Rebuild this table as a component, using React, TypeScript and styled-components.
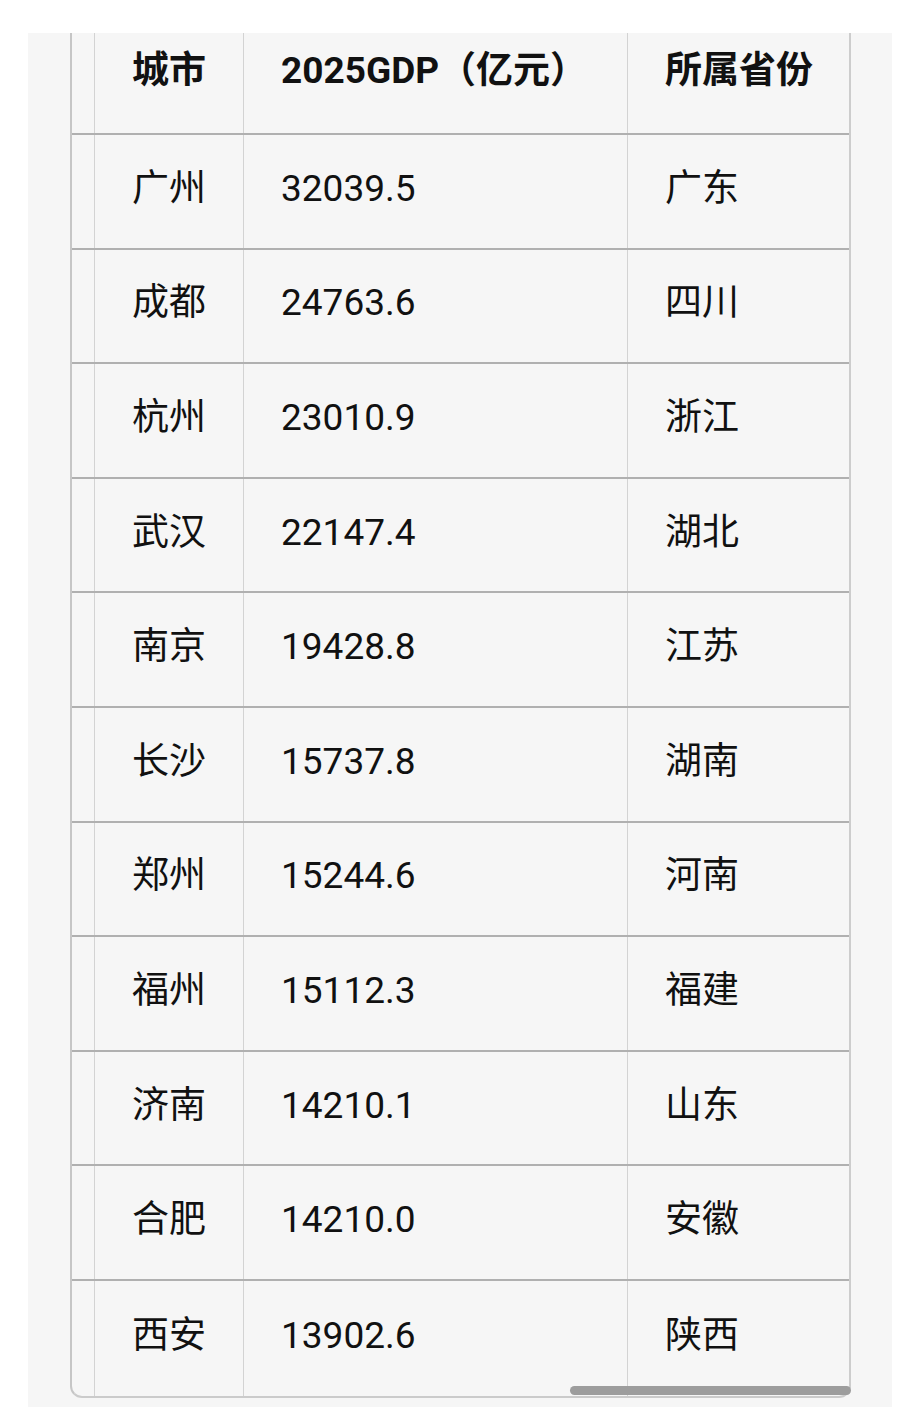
import React from "react";
import styled, { createGlobalStyle } from "styled-components";

const GlobalStyle = createGlobalStyle`
  html, body {
    margin: 0;
    padding: 0;
    background: #ffffff;
  }
  body {
    font-family: Roboto, "Noto Sans CJK SC", "Noto Sans", sans-serif;
    color: #111111;
  }
`;

const Panel = styled.div`
  margin: 33px 0 0 28px;
  width: 864px;
  height: 1374px;
  box-sizing: border-box;
  padding: 0 41px 0 42px;
  background: #f6f6f6;
`;

const TableFrame = styled.div`
  position: relative;
  border-left: 2px solid #c6c6c6;
  border-right: 2px solid #cdcdcd;
  border-bottom: 2px solid #cbcbcb;
  border-radius: 0 0 12px 12px;
`;

const Row = styled.div<{ $head?: boolean; $last?: boolean }>`
  display: grid;
  grid-template-columns: 22px 149px 384px 1fr;
  height: ${({ $head }) => ($head ? "102px" : "114.6px")};
  box-sizing: border-box;
  border-bottom: ${({ $last }) => ($last ? "none" : "2px solid #b0b0b0")};
`;

const Cell = styled.div<{ $head?: boolean }>`
  display: flex;
  align-items: center;
  box-sizing: border-box;
  padding: 0 0 ${({ $head }) => ($head ? "24px" : "5px")} 37px;
  border-left: 1.5px solid #d3d3d3;
  font-size: 37px;
  line-height: 1.3;
  font-weight: ${({ $head }) => ($head ? 700 : 400)};
  white-space: nowrap;
`;

const Gutter = styled.div``;

const ScrollThumb = styled.div`
  position: absolute;
  left: 498px;
  right: -2px;
  bottom: 1px;
  height: 9px;
  border-radius: 5px;
  background: #9d9d9d;
`;

const rows: [string, string, string][] = [
  ["广州", "32039.5", "广东"],
  ["成都", "24763.6", "四川"],
  ["杭州", "23010.9", "浙江"],
  ["武汉", "22147.4", "湖北"],
  ["南京", "19428.8", "江苏"],
  ["长沙", "15737.8", "湖南"],
  ["郑州", "15244.6", "河南"],
  ["福州", "15112.3", "福建"],
  ["济南", "14210.1", "山东"],
  ["合肥", "14210.0", "安徽"],
  ["西安", "13902.6", "陕西"],
];

export default function App() {
  return (
    <>
      <GlobalStyle />
      <Panel>
        <TableFrame>
          <Row $head>
            <Gutter />
            <Cell $head>城市</Cell>
            <Cell $head>2025GDP（亿元）</Cell>
            <Cell $head>所属省份</Cell>
          </Row>
          {rows.map(([city, gdp, prov], i) => (
            <Row key={city} $last={i === rows.length - 1}>
              <Gutter />
              <Cell>{city}</Cell>
              <Cell>{gdp}</Cell>
              <Cell>{prov}</Cell>
            </Row>
          ))}
          <ScrollThumb />
        </TableFrame>
      </Panel>
    </>
  );
}
